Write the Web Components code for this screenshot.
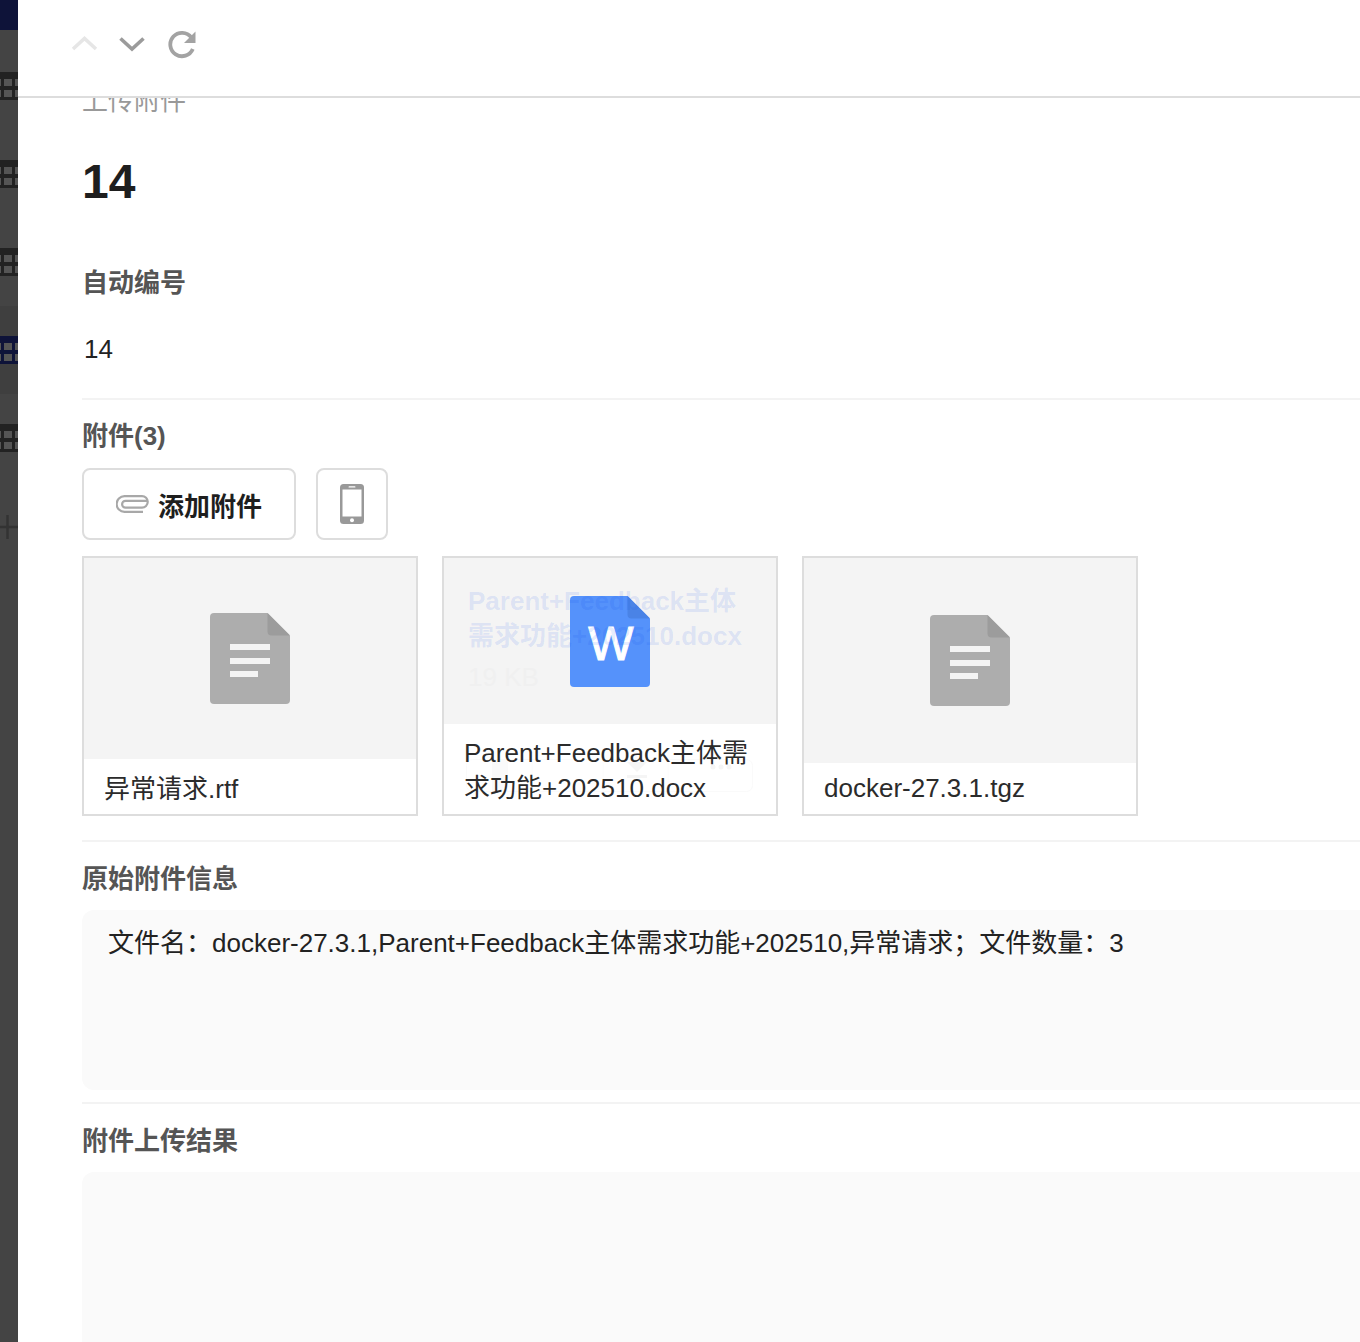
<!DOCTYPE html>
<html><head><meta charset="utf-8">
<style>
html,body{margin:0;padding:0;height:1342px;overflow:hidden;background:#fff}
body{font-family:"Liberation Sans","Noto Sans CJK SC",sans-serif;color:#222}
app-shell{height:1342px}
</style></head><body>
<app-shell>
  <side-rail slot="rail"></side-rail>
  <top-bar slot="top"></top-bar>
  <div style="margin-top:-15px">
    <field-label muted>上传附件</field-label>
    <record-title>14</record-title>
    <field-label style="margin-top:53px">自动编号</field-label>
    <field-value>14</field-value>
    <h-rule style="margin-top:31px"></h-rule>
    <field-label style="margin-top:18px">附件(3)</field-label>
    <attach-actions style="margin-top:14px"></attach-actions>
    <attach-grid style="margin-top:16px">
      <attach-card name="异常请求.rtf" preview="201" kind="doc" top="55" pad="13"></attach-card>
      <attach-card name="Parent+Feedback主体需求功能+202510.docx" preview="166" kind="word" top="38" pad="12" ghost></attach-card>
      <attach-card name="docker-27.3.1.tgz" preview="205" kind="doc" top="57" pad="8"></attach-card>
    </attach-grid>
    <h-rule style="margin-top:24px"></h-rule>
    <field-label style="margin-top:19px">原始附件信息</field-label>
    <info-box style="margin-top:13px;height:180px">文件名：docker-27.3.1,Parent+Feedback主体需求功能+202510,异常请求；文件数量：3</info-box>
    <h-rule style="margin-top:12px"></h-rule>
    <field-label style="margin-top:19px">附件上传结果</field-label>
    <info-box style="margin-top:13px;height:180px"></info-box>
  </div>
</app-shell>
<script>
function def(name,html){
  customElements.define(name,class extends HTMLElement{
    connectedCallback(){
      if(this.shadowRoot)return;
      const r=this.attachShadow({mode:'open'});
      r.innerHTML=typeof html==='function'?html(this):html;
    }
  });
}
def('app-shell',`<style>
:host{display:grid;grid-template-columns:18px 1fr;overflow:hidden;width:1360px}
.main{display:flex;flex-direction:column;min-width:0;height:1342px;overflow:hidden}
.scroll{flex:1;overflow:hidden;padding-left:64px}
</style>
<div><slot name="rail"></slot></div>
<div class="main"><slot name="top"></slot><div class="scroll"><slot></slot></div></div>`);
const grid=`<svg width="18" height="28" viewBox="0 0 18 28" style="display:block"><rect width="18" height="28" fill="currentColor"/>
<g fill="#555"><rect x="-6" y="7" width="7" height="7"/><rect x="-6" y="18" width="7" height="7"/><rect x="4" y="7" width="8" height="7"/><rect x="4" y="18" width="8" height="7"/><rect x="15" y="7" width="8" height="7"/><rect x="15" y="18" width="8" height="7"/></g></svg>`;
def('side-rail',`<style>
:host{display:flex;flex-direction:column;height:1342px;background:#444;width:18px;overflow:hidden}
.top{height:30px;background:#0e1339}
.gap{height:42px}
.item{height:88px;color:#222;box-sizing:border-box}
.band{background:#3f3f3f;height:88px;padding-top:30px;box-sizing:border-box;color:#0e1339}
svg{display:block}
</style>
<div class="top"></div><div class="gap"></div>
<div class="item">${grid}</div>
<div class="item">${grid}</div>
<div class="item" style="height:58px">${grid}</div>
<div class="band">${grid}</div>
<div class="item" style="margin-top:30px">${grid}</div>
<svg width="18" height="24" viewBox="0 0 18 24" style="margin-top:3px"><path d="M7.500 0v24M0 12H18" stroke="#333" stroke-width="2.500" fill="none"/></svg>`);
def('top-bar',`<style>
:host{display:flex;align-items:center;height:98px;box-sizing:border-box;border-bottom:2px solid #ddd;background:#fff;padding:0 0 9px 52px;gap:18px;position:relative;z-index:2}
svg{display:block}
</style>
<svg width="30" height="30" viewBox="0 0 30 30"><path d="M3 20L14.500 9.500 26 20" fill="none" stroke="#e6e6e6" stroke-width="3.600"/></svg>
<svg width="30" height="30" viewBox="0 0 30 30"><path d="M2.500 9.500L14 20 25.500 9.500" fill="none" stroke="#9b9b9b" stroke-width="3.600"/></svg>
<svg width="30" height="30" viewBox="0 0 30 30" style="margin-left:2px"><path d="M24.800 20a11.700 11.700 0 1 1 -1.500-11.600" fill="none" stroke="#a3a3a3" stroke-width="3.800"/><path d="M27.500 2.500v11.500h-11.500z" fill="#a3a3a3"/></svg>`);
def('field-label',h=>`<style>
:host{display:block;font-size:26px;line-height:36px;font-weight:${h.hasAttribute('muted')?400:700};color:${h.hasAttribute('muted')?'#999':'#555'}}
</style><slot></slot>`);
def('record-title',`<style>:host{display:block;font-size:48px;font-weight:700;line-height:60px;color:#1e1e1e;margin-top:33px}</style><slot></slot>`);
def('field-value',`<style>:host{display:block;font-size:26px;line-height:36px;color:#222;margin-top:30px;padding-left:2px}</style><slot></slot>`);
def('h-rule',`<style>:host{display:block;height:2px;background:#f3f3f3}</style>`);
def('attach-actions',`<style>
:host{display:flex;gap:20px}
.b{height:72px;box-sizing:border-box;border:2px solid #ddd;border-radius:8px;display:flex;align-items:center;justify-content:center;background:#fff}
.add{width:214px;gap:9px;font-size:26px;font-weight:700;color:#1e1e1e}
.ph{width:72px}
svg{display:block}
</style>
<div class="b add"><svg width="33" height="20" viewBox="0 0 33 20"><path d="M32 6.800H9.500a3.400 3.400 0 0 0 0 6.800H26a5.300 5.300 0 0 0 0-11.500H8.500a7.500 7.500 0 0 0 0 15.800H27" fill="none" stroke="#a8a8a8" stroke-width="2.200"/></svg><span>添加附件</span></div>
<div class="b ph"><svg width="24" height="40" viewBox="0 0 24 40"><rect width="24" height="40" rx="3.500" fill="#999"/><rect x="2.500" y="5.500" width="19" height="27" fill="#fff"/><rect x="8.500" y="2.200" width="7" height="1.400" rx=".7" fill="#fff"/><circle cx="12" cy="36.200" r="2" fill="#fff"/></svg></div>`);
def('attach-grid',`<style>:host{display:flex;gap:24px}</style><slot></slot>`);
const docIcon=`<svg width="80" height="91" viewBox="0 0 80 91" style="display:block"><path d="M4 0h53.500L80 22.500V87a4 4 0 0 1-4 4H4a4 4 0 0 1-4-4V4a4 4 0 0 1 4-4z" fill="#adadad"/><path d="M57.500 0L80 22.500H61.500a4 4 0 0 1-4-4z" fill="#9c9c9c"/><rect x="20" y="31" width="40" height="6" fill="#f4f4f4"/><rect x="20" y="45" width="40" height="6" fill="#f4f4f4"/><rect x="20" y="58" width="28" height="6" fill="#f4f4f4"/></svg>`;
const wordIcon=`<svg width="80" height="91" viewBox="0 0 80 91" style="display:block"><path d="M4 0h53.500L80 22.500V87a4 4 0 0 1-4 4H4a4 4 0 0 1-4-4V4a4 4 0 0 1 4-4z" fill="#5592fb"/><path d="M57.500 0L80 22.500H61.500a4 4 0 0 1-4-4z" fill="#4a83e6"/></svg>`;
const faint=`<svg class="fa" width="288" height="34" viewBox="0 0 288 34"><rect x=".5" y=".5" width="286" height="32" rx="6" fill="#fff" stroke="#fafafa"/><rect x="26" y="1" width="16" height="32" fill="#fafafa"/><path d="M66 1v32M137 1v32M202 1v32" stroke="#fcfcfc"/><path d="M161 3h20l-10 10z" fill="#f5f5f5"/><rect x="161" y="16" width="20" height="3" fill="#f5f5f5"/><g fill="#f5f5f5"><circle cx="247" cy="8" r="2.500"/><circle cx="255" cy="8" r="2.500"/><circle cx="263" cy="8" r="2.500"/></g></svg>`;
def('attach-card',h=>{
 const pv=+h.getAttribute('preview'),word=h.getAttribute('kind')==='word',top=+h.getAttribute('top'),pad=h.getAttribute('pad');
 return `<style>
:host{display:flex;flex-direction:column;width:336px;height:260px;box-sizing:border-box;border:2px solid #ddd;background:#fff;position:relative;overflow:hidden}
.pv{height:${pv}px;background:#f4f4f4;position:relative;flex:none}
.ic{position:absolute;left:126px;top:${top}px}
.w{position:absolute;left:126px;top:${top+20}px;width:82px;text-align:center;font:400 48px/56px "Liberation Sans",sans-serif;color:#fff;-webkit-text-stroke:1px #fff}
.gh{position:absolute;left:24px;top:26px;width:285px;font-size:26px;line-height:35px;font-weight:700;color:rgba(0,70,235,.11);word-break:break-all}
.sz{position:absolute;left:24px;top:101px;font-size:26px;line-height:36px;color:#f0f0f0}
.n{padding:${pad}px 20px 0;font-size:26px;line-height:35px;color:#2b2b2b;word-break:break-all;position:relative}
.fa{position:absolute;left:22px;top:201px;display:block}
</style>
<div class="pv">
<div class="ic">${word?wordIcon:docIcon}</div>
${word?'<div class="w">W</div>':''}
${h.hasAttribute('ghost')?`<div class="gh">Parent+Feedback主体需求功能+202510.docx</div><div class="sz">19 KB</div>`:''}
</div>
${h.hasAttribute('ghost')?faint:''}
<div class="n">${h.getAttribute('name')}</div>`;
});
def('info-box',`<style>:host{display:block;box-sizing:border-box;background:#fafafa;border-radius:12px 0 0 12px;padding:15px 26px;font-size:26px;line-height:36px;color:#222;white-space:nowrap}</style><slot></slot>`);
</script>
</body></html>
